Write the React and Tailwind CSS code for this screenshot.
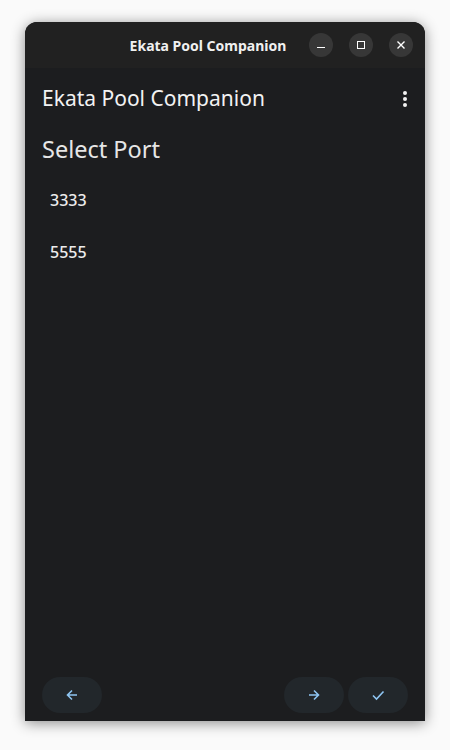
import React from "react";

const FONT = { fontFamily: '"Noto Sans", "Open Sans", sans-serif' };

function WinButton({ children }) {
  return (
    <div className="w-6 h-6 rounded-full bg-[#373737] flex items-center justify-center">
      {children}
    </div>
  );
}

function PillButton({ children }) {
  return (
    <button className="w-[60px] h-9 rounded-full bg-[#22272b] flex items-center justify-center">
      {children}
    </button>
  );
}

export default function App() {
  return (
    <div className="w-[450px] h-[750px] bg-[#fafafa] pt-[22px] px-[25px]" style={FONT}>
      <div className="w-[400px] h-[699px] rounded-t-[12px] bg-[#1c1d1f] flex flex-col overflow-hidden shadow-[0_2px_14px_rgba(0,0,0,0.45)]">
        {/* title bar */}
        <div className="h-[46px] bg-[#212121] flex items-center relative">
          <div className="flex-1 text-center text-[14px] font-bold text-[#f0f0f0] pr-[34px]">
            Ekata Pool Companion
          </div>
          <div className="absolute right-3 top-0 h-full flex items-center gap-4">
            <WinButton>
              <div className="w-2 h-[1.5px] bg-white mt-[5px]" />
            </WinButton>
            <WinButton>
              <div className="w-2 h-2 border-[1.5px] border-white" />
            </WinButton>
            <WinButton>
              <svg width="10" height="10" viewBox="0 0 10 10">
                <path d="M1.5 1.5 L8.5 8.5 M8.5 1.5 L1.5 8.5" stroke="#fff" strokeWidth="1.4" />
              </svg>
            </WinButton>
          </div>
        </div>

        {/* app bar */}
        <div className="flex items-center justify-between pl-[17px] pr-[17px] pt-[4px] h-[58px]">
          <span className="text-[21px] text-[#f2f2f2]">Ekata Pool Companion</span>
          <svg width="6" height="18" viewBox="0 0 6 18">
            <circle cx="3" cy="3" r="2" fill="#f2f2f2" />
            <circle cx="3" cy="9" r="2" fill="#f2f2f2" />
            <circle cx="3" cy="15" r="2" fill="#f2f2f2" />
          </svg>
        </div>

        <div className="pl-[17px] pt-[5px] text-[23.5px] leading-[36px] text-[#e6e6e6]">Select Port</div>

        <div className="flex flex-col mt-[7px]">
          <div className="h-[52px] flex items-center pl-[25px] text-[16px] font-medium text-[#ececec]">3333</div>
          <div className="h-[52px] flex items-center pl-[25px] text-[16px] font-medium text-[#ececec]">5555</div>
        </div>

        <div className="flex-1" />

        {/* bottom buttons */}
        <div className="flex items-center justify-between px-[17px] pb-[8px]">
          <PillButton>
            <svg width="14" height="14" viewBox="0 0 14 14">
              <path d="M12 7 H2.5 M7 2.5 L2.5 7 L7 11.5" stroke="#8ec5f2" strokeWidth="1.6" fill="none" />
            </svg>
          </PillButton>
          <div className="flex gap-1">
            <PillButton>
              <svg width="14" height="14" viewBox="0 0 14 14">
                <path d="M2 7 H11.5 M7 2.5 L11.5 7 L7 11.5" stroke="#8ec5f2" strokeWidth="1.6" fill="none" />
              </svg>
            </PillButton>
            <PillButton>
              <svg width="14" height="14" viewBox="0 0 14 14">
                <path d="M2 7.5 L5.5 11 L12.5 3.5" stroke="#8ec5f2" strokeWidth="1.6" fill="none" />
              </svg>
            </PillButton>
          </div>
        </div>
      </div>
    </div>
  );
}
